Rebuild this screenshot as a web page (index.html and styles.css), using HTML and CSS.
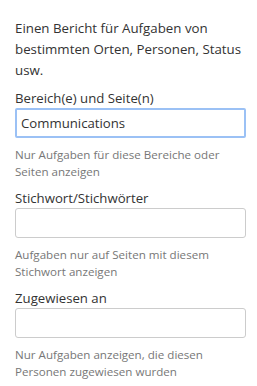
FILE: index.html
```html
<!DOCTYPE html>
<html lang="de">
<head>
  <meta charset="UTF-8">
  <meta name="viewport" content="width=device-width, initial-scale=1.0">
  <title>Aufgabenbericht</title>
  <link rel="stylesheet" href="styles.css">
</head>
<body>

  <div class="panel">
    <p class="intro">Einen Bericht für Aufgaben von bestimmten Orten, Personen, Status usw.</p>

    <div class="field">
      <label for="areas">Bereich(e) und Seite(n)</label>
      <input type="text" id="areas" class="active" value="Communications">
      <p class="help">Nur Aufgaben für diese Bereiche oder Seiten anzeigen</p>
    </div>

    <div class="field">
      <label for="keywords">Stichwort/Stichwörter</label>
      <input type="text" id="keywords">
      <p class="help">Aufgaben nur auf Seiten mit diesem Stichwort anzeigen</p>
    </div>

    <div class="field">
      <label for="assigned">Zugewiesen an</label>
      <input type="text" id="assigned">
      <p class="help">Nur Aufgaben anzeigen, die diesen Personen zugewiesen wurden</p>
    </div>
  </div>

</body>
</html>
```

FILE: styles.css
```css
* {
  margin: 0;
  padding: 0;
  box-sizing: border-box;
}

html, body {
  background: #fff;
  font-family: "Open Sans", "Noto Sans", Arial, sans-serif;
  color: #333;
}

.panel {
  padding: 18px 11px 0 15px;
}

.intro {
  font-size: 13.3px;
  line-height: 21px;
  margin-right: -4px;
  margin-bottom: 7px;
}

.field {
  display: flex;
  flex-direction: column;
  margin-bottom: 8px;
}

.field label {
  font-size: 13.2px;
  line-height: 20px;
}

.field input {
  height: 30px;
  width: 231px;
  border: 1px solid #ccc;
  border-radius: 3px;
  padding: 0 5px;
  font-family: inherit;
  font-size: 13.2px;
  color: #333;
  outline: none;
}

.field input.active {
  border: 2px solid #9bc1f5;
  border-radius: 2px;
  padding: 0 4px;
}

.help {
  margin-top: 8px;
  font-size: 11.6px;
  line-height: 17px;
  color: #777;
}
```
